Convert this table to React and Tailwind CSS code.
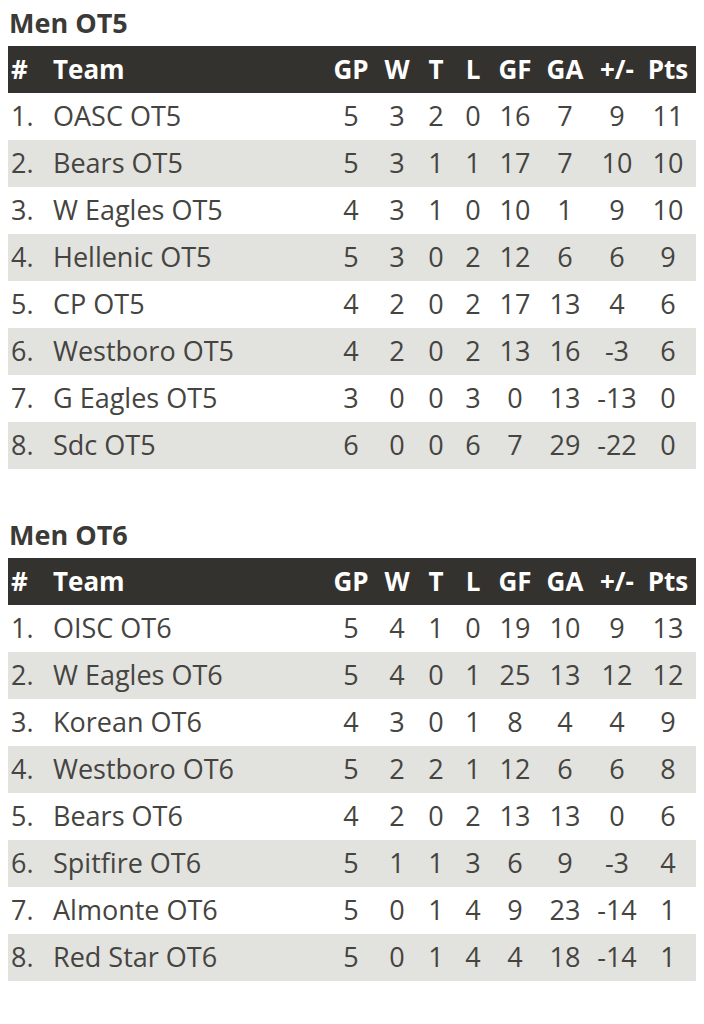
import React from "react";

const tables = [
  {
    title: "Men OT5",
    rows: [
      ["OASC OT5", 5, 3, 2, 0, 16, 7, 9, 11],
      ["Bears OT5", 5, 3, 1, 1, 17, 7, 10, 10],
      ["W Eagles OT5", 4, 3, 1, 0, 10, 1, 9, 10],
      ["Hellenic OT5", 5, 3, 0, 2, 12, 6, 6, 9],
      ["CP OT5", 4, 2, 0, 2, 17, 13, 4, 6],
      ["Westboro OT5", 4, 2, 0, 2, 13, 16, -3, 6],
      ["G Eagles OT5", 3, 0, 0, 3, 0, 13, -13, 0],
      ["Sdc OT5", 6, 0, 0, 6, 7, 29, -22, 0],
    ],
  },
  {
    title: "Men OT6",
    rows: [
      ["OISC OT6", 5, 4, 1, 0, 19, 10, 9, 13],
      ["W Eagles OT6", 5, 4, 0, 1, 25, 13, 12, 12],
      ["Korean OT6", 4, 3, 0, 1, 8, 4, 4, 9],
      ["Westboro OT6", 5, 2, 2, 1, 12, 6, 6, 8],
      ["Bears OT6", 4, 2, 0, 2, 13, 13, 0, 6],
      ["Spitfire OT6", 5, 1, 1, 3, 6, 9, -3, 4],
      ["Almonte OT6", 5, 0, 1, 4, 9, 23, -14, 1],
      ["Red Star OT6", 5, 0, 1, 4, 4, 18, -14, 1],
    ],
  },
];

const headers = ["GP", "W", "T", "L", "GF", "GA", "+/-", "Pts"];

// fixed column template so the stat columns line up between tables
const cols =
  "grid grid-cols-[45px_1fr_46px_46px_32px_42px_42px_58px_46px_56px] items-center";

const Standings = ({ title, rows, first }) => (
  <section className={first ? "pt-[5px]" : "pt-[48px]"}>
    <h2 className="text-[27px] leading-[36px] font-bold text-[#3b3a36] mb-[5px] pl-[1px]">
      {title}
    </h2>
    <div className={`${cols} h-[47px] bg-[#34322e] text-white font-bold text-[26px]`}>
      <div className="pl-[3px]">#</div>
      <div>Team</div>
      {headers.map((h) => (
        <div key={h} className="text-center">
          {h}
        </div>
      ))}
    </div>
    {rows.map((r, i) => (
      <div
        key={r[0]}
        className={`${cols} h-[47px] text-[27px] text-[#45443f] ${
          i % 2 === 1 ? "bg-[#e2e2df]" : "bg-white"
        }`}
      >
        <div className="pl-[3px]">{i + 1}.</div>
        <div className="whitespace-nowrap">{r[0]}</div>
        {r.slice(1).map((v, j) => (
          <div key={j} className="text-center">
            {v}
          </div>
        ))}
      </div>
    ))}
  </section>
);

const App = () => {
  return (
    <div
      className="w-[704px] min-h-[1024px] bg-white px-[8px]"
      style={{ fontFamily: '"Open Sans", sans-serif' }}
    >
      {tables.map((t, i) => (
        <Standings key={t.title} {...t} first={i === 0} />
      ))}
    </div>
  );
};

export default App;
